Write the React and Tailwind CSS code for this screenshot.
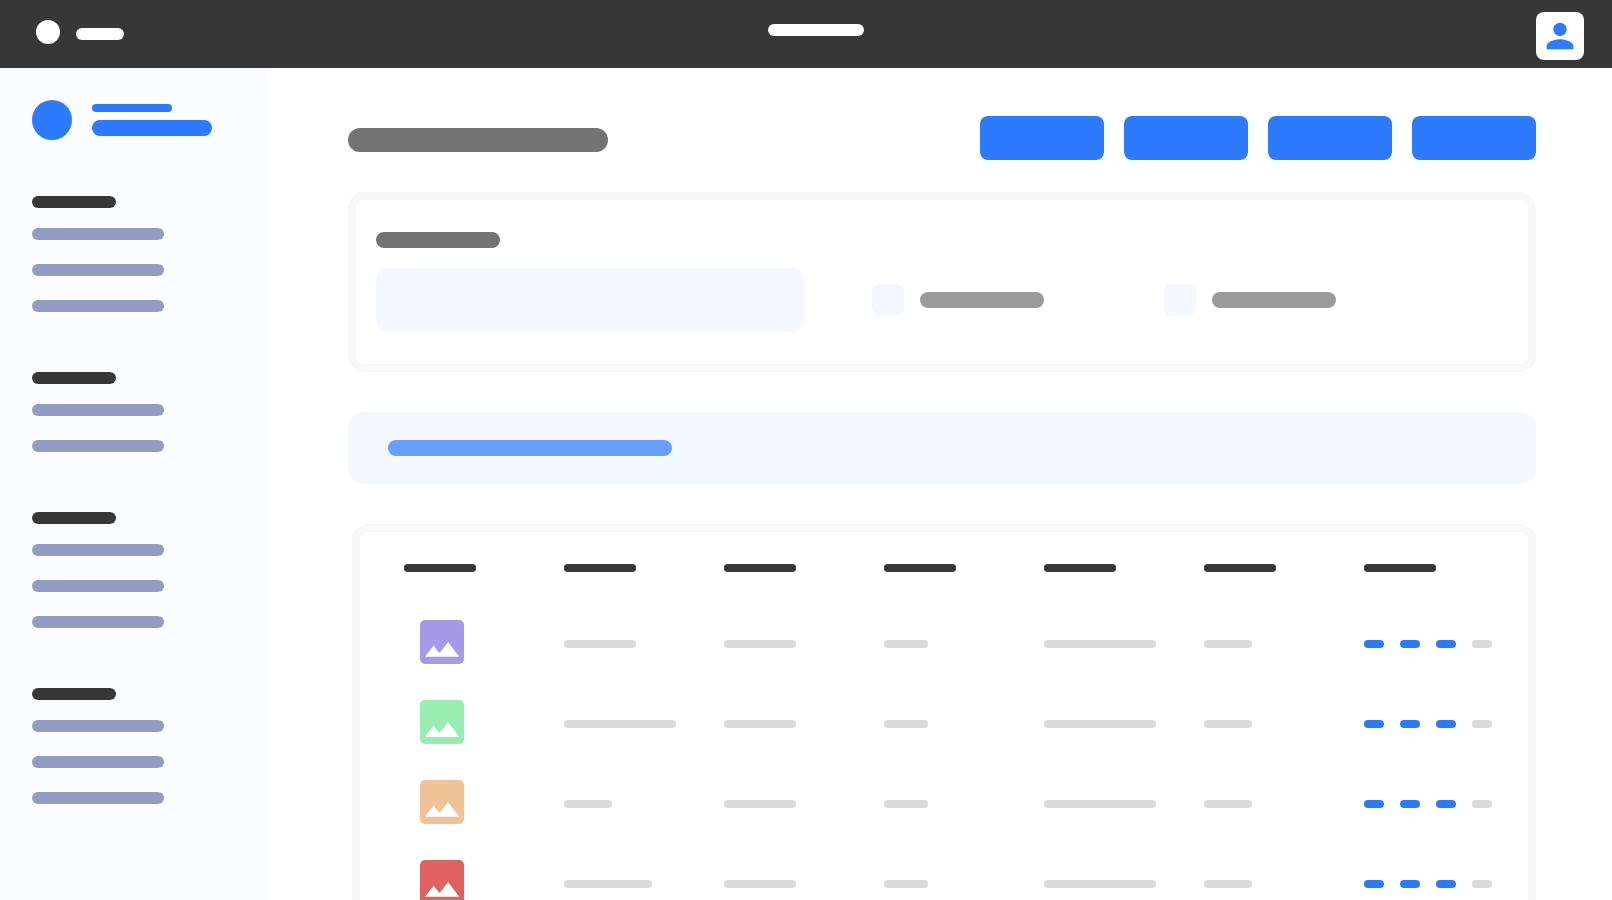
import { MdPerson } from 'react-icons/md'
import clsx from 'clsx'

const menu = [
  { id: 'general', links: 3 },
  { id: 'catalog', links: 2 },
  { id: 'sales', links: 3 },
  { id: 'settings', links: 3 },
]

const actions = ['Import', 'Export', 'Duplicate', 'Create']

const columns = ['Image', 'Name', 'Category', 'Stock', 'Description', 'Price', 'Actions']

const rows = [
  { id: 1, color: 'text-[#a69ae8]', name: 'w-18' },
  { id: 2, color: 'text-[#98edb0]', name: 'w-28' },
  { id: 3, color: 'text-[#f1c297]', name: 'w-12' },
  { id: 4, color: 'text-[#e06161]', name: 'w-22' },
]

function Bar({ className }) {
  return <span className={clsx('block rounded-full', className)} />
}

function Thumbnail({ className }) {
  return (
    <svg viewBox="3 3 18 18" className={clsx('block size-11', className)} aria-hidden="true">
      <rect x="3" y="3" width="18" height="18" rx="2" fill="currentColor" />
      <path d="M8.5 13.5l2.5 3.01L14.5 12l4.5 6H5z" fill="#fff" />
    </svg>
  )
}

function Header() {
  return (
    <header className="flex h-17 shrink-0 items-start justify-between bg-[#373737] pt-3 pr-7 pl-9">
      <a href="#" aria-label="Home" className="flex gap-4 pt-2">
        <Bar className="size-6 bg-white" />
        <Bar className="mt-2 h-3 w-12 bg-white" />
      </a>
      <Bar className="mt-3 h-3 w-24 bg-white" />
      <button aria-label="Account" className="ml-7 flex size-12 items-center justify-center rounded-lg bg-white text-[#2c7aff]">
        <MdPerson size={40} />
      </button>
    </header>
  )
}

function Sidebar() {
  return (
    <aside className="w-67 shrink-0 bg-[#fbfcff] px-8 pt-8">
      <div className="flex gap-5">
        <Bar className="size-10 bg-[#2c7aff]" />
        <div className="space-y-2 pt-1">
          <Bar className="h-2 w-20 bg-[#2c7aff]" />
          <Bar className="h-4 w-30 bg-[#2c7aff]" />
        </div>
      </div>
      <nav className="mt-14 space-y-15">
        {menu.map((group) => (
          <div key={group.id}>
            <Bar className="h-3 w-21 bg-[#373737]" />
            <ul className="mt-5 space-y-6">
              {Array.from({ length: group.links }, (_, i) => (
                <li key={i}>
                  <a href="#" aria-label={`${group.id} ${i + 1}`} className="block w-33">
                    <Bar className="h-3 bg-[#929bc1]" />
                  </a>
                </li>
              ))}
            </ul>
          </div>
        ))}
      </nav>
    </aside>
  )
}

function CheckField({ id, label }) {
  return (
    <label htmlFor={id} aria-label={label} className="flex h-16 items-center gap-4">
      <input
        id={id}
        type="checkbox"
        className="size-8 appearance-none rounded-lg bg-[#f3f7ff] checked:bg-[#2c7aff]"
      />
      <Bar className="h-4 w-31 bg-[#9a9a9a]" />
    </label>
  )
}

function Filters() {
  return (
    <form className="mt-8 grid grid-cols-[minmax(0,1fr)_292px_292px] items-end rounded-2xl border-8 border-[#f8f8f8] pt-8 pr-18 pb-8 pl-5">
      <div className="mr-17">
        <label htmlFor="search" aria-label="Search" className="block w-31">
          <Bar className="h-4 bg-[#737373]" />
        </label>
        <input
          id="search"
          type="text"
          className="mt-5 block h-16 w-full rounded-xl bg-[#f3f7ff] px-5 font-['Inter',sans-serif] text-base outline-none"
        />
      </div>
      <CheckField id="in-stock" label="In stock" />
      <CheckField id="on-sale" label="On sale" />
    </form>
  )
}

function ItemsTable() {
  return (
    <div className="mt-10 ml-1 rounded-2xl border-8 border-[#f8f8f8] pt-8 pr-1 pl-11">
      <table className="w-full table-fixed">
        <thead>
          <tr>
            {columns.map((name) => (
              <th key={name} aria-label={name} className="p-0 pb-8">
                <Bar className="h-2 w-18 bg-[#373737]" />
              </th>
            ))}
          </tr>
        </thead>
        <tbody>
          {rows.map((row) => (
            <tr key={row.id} className="h-20">
              <td className="p-0 pb-1 pl-4">
                <Thumbnail className={row.color} />
              </td>
              <td className="p-0"><Bar className={clsx('h-2 bg-[#dadada]', row.name)} /></td>
              <td className="p-0"><Bar className="h-2 w-18 bg-[#dadada]" /></td>
              <td className="p-0"><Bar className="h-2 w-11 bg-[#dadada]" /></td>
              <td className="p-0"><Bar className="h-2 w-28 bg-[#dadada]" /></td>
              <td className="p-0"><Bar className="h-2 w-12 bg-[#dadada]" /></td>
              <td className="p-0">
                <div className="flex gap-4">
                  <button aria-label="View" className="h-2 w-5 rounded-full bg-[#2c7aff]" />
                  <button aria-label="Edit" className="h-2 w-5 rounded-full bg-[#2c7aff]" />
                  <button aria-label="Copy" className="h-2 w-5 rounded-full bg-[#2c7aff]" />
                  <button aria-label="Delete" className="h-2 w-5 rounded-full bg-[#dadada]" />
                </div>
              </td>
            </tr>
          ))}
        </tbody>
      </table>
    </div>
  )
}

export default function App() {
  return (
    <div className="flex h-screen flex-col overflow-hidden bg-white">
      <Header />
      <div className="flex min-h-0 flex-1">
        <Sidebar />
        <main className="min-w-0 flex-1 overflow-hidden pt-12 pr-19 pl-20">
          <div className="flex items-center justify-between">
            <Bar className="mt-1 h-6 w-65 bg-[#737373]" />
            <div className="flex gap-5">
              {actions.map((name) => (
                <button key={name} aria-label={name} className="h-11 w-31 rounded-lg bg-[#2c7aff]" />
              ))}
            </div>
          </div>
          <Filters />
          <div className="mt-10 rounded-2xl bg-[#f3f7ff] px-10 py-7">
            <Bar className="h-4 w-71 bg-[#689fff]" />
          </div>
          <ItemsTable />
        </main>
      </div>
    </div>
  )
}
